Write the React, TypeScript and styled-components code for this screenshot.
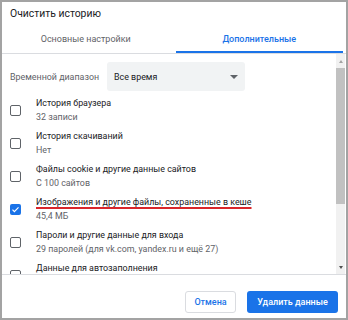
import styled, { createGlobalStyle } from "styled-components";

const GlobalStyle = createGlobalStyle`
  html, body {
    margin: 0;
    padding: 0;
    background: #ffffff;
  }
  body {
    font-family: Roboto, "Liberation Sans", Arial, sans-serif;
  }
`;

// the last row is cut by the footer, its second line is never seen
const items = [
  { title: "История браузера", sub: "32 записи", checked: false },
  { title: "История скачиваний", sub: "Нет", checked: false },
  { title: "Файлы cookie и другие данные сайтов", sub: "С 100 сайтов", checked: false },
  {
    title: "Изображения и другие файлы, сохраненные в кеше",
    sub: "45,4 МБ",
    checked: true,
    marked: true,
  },
  {
    title: "Пароли и другие данные для входа",
    sub: "29 паролей (для vk.com, yandex.ru и ещё 27)",
    checked: false,
  },
  { title: "Данные для автозаполнения", sub: "\u00a0", checked: false },
];

export default function App() {
  return (
    <>
      <GlobalStyle />
      <Frame>
        <Title>Очистить историю</Title>
        <Tabs>
          <Tab>Основные настройки</Tab>
          <Tab $active>Дополнительные</Tab>
        </Tabs>
        <Body>
          <Content>
            <RangeRow>
              <RangeLabel>Временной диапазон</RangeLabel>
              <Select>
                <span>Все время</span>
                <Caret />
              </Select>
            </RangeRow>
            {items.map((item) => (
              <Item key={item.title}>
                <Box $checked={item.checked}>
                  {item.checked && (
                    <svg width="9" height="9" viewBox="0 0 24 24">
                      <path
                        d="M4 12.5l5 5L20 6.5"
                        fill="none"
                        stroke="#fff"
                        strokeWidth="3.2"
                      />
                    </svg>
                  )}
                </Box>
                <Texts>
                  <ItemTitle $marked={item.marked}>{item.title}</ItemTitle>
                  <ItemSub>{item.sub}</ItemSub>
                </Texts>
              </Item>
            ))}
          </Content>
          <Scrollbar>
            <Arrow $up />
            <Thumb />
            <Track />
            <Arrow />
          </Scrollbar>
        </Body>
        <Footer>
          <CancelButton>Отмена</CancelButton>
          <PrimaryButton>Удалить данные</PrimaryButton>
        </Footer>
      </Frame>
    </>
  );
}

const Frame = styled.div`
  width: 348px;
  height: 320px;
  box-sizing: border-box;
  border: 2px solid #a3a3a3;
  background: #fff;
  display: flex;
  flex-direction: column;
  overflow: hidden;
  color: #202124;
`;

const Title = styled.div`
  height: 23px;
  padding-left: 8px;
  display: flex;
  align-items: center;
  font-size: 10.4px;
  color: #202124;
`;

const Tabs = styled.div`
  display: flex;
  height: 28px;
  border-bottom: 1px solid #dadce0;
`;

const Tab = styled.div<{ $active?: boolean }>`
  flex: 1;
  display: flex;
  align-items: center;
  justify-content: center;
  font-size: 9px;
  font-weight: ${(p) => (p.$active ? 500 : 400)};
  color: ${(p) => (p.$active ? "#1a73e8" : "#5f6368")};
  box-shadow: ${(p) => (p.$active ? "inset 0 -2px 0 #1a73e8" : "none")};
  margin-left: ${(p) => (p.$active ? "6px" : "0")};
  margin-right: ${(p) => (p.$active ? "3px" : "0")};
`;

const Body = styled.div`
  flex: 1;
  display: flex;
  min-height: 0;
  border-bottom: 1px solid #dadce0;
`;

const Content = styled.div`
  flex: 1;
  overflow: hidden;
  padding-left: 8px;
  padding-top: 8px;
`;

const RangeRow = styled.div`
  display: flex;
  align-items: center;
  height: 29px;
  margin-bottom: 3px;
`;

const RangeLabel = styled.div`
  font-size: 8.9px;
  color: #5f6368;
  width: 97px;
`;

const Select = styled.div`
  width: 138px;
  height: 29px;
  box-sizing: border-box;
  background: #f1f3f4;
  border-radius: 3px;
  padding: 0 7px;
  display: flex;
  align-items: center;
  justify-content: space-between;
  font-size: 8.9px;
  color: #202124;
`;

const Caret = styled.div`
  width: 0;
  height: 0;
  border-left: 4px solid transparent;
  border-right: 4px solid transparent;
  border-top: 4px solid #5f6368;
`;

const Item = styled.div`
  display: flex;
  align-items: center;
  gap: 15px;
  height: 33px;
`;

const Box = styled.div<{ $checked?: boolean }>`
  width: 11px;
  height: 11px;
  box-sizing: border-box;
  border-radius: 2px;
  border: ${(p) => (p.$checked ? "none" : "1.5px solid #5f6368")};
  background: ${(p) => (p.$checked ? "#1a73e8" : "transparent")};
  display: flex;
  align-items: center;
  justify-content: center;
  flex-shrink: 0;
`;

const Texts = styled.div`
  display: flex;
  flex-direction: column;
  gap: 3px;
`;

const ItemTitle = styled.div<{ $marked?: boolean }>`
  font-size: 8.9px;
  line-height: 11px;
  color: #202124;
  white-space: nowrap;
  ${(p) =>
    p.$marked &&
    `
    text-decoration: underline;
    text-decoration-color: #d9262b;
    text-decoration-thickness: 2px;
    text-underline-offset: 2px;
    text-decoration-skip-ink: none;
  `}
`;

const ItemSub = styled.div`
  font-size: 8.9px;
  line-height: 11px;
  color: #5f6368;
  white-space: nowrap;
`;

const Scrollbar = styled.div`
  width: 9px;
  margin-right: 1px;
  display: flex;
  flex-direction: column;
  background: #f1f1f1;
`;

const Arrow = styled.div<{ $up?: boolean }>`
  height: 14px;
  display: flex;
  align-items: center;
  justify-content: center;
  &::after {
    content: "";
    border-left: 2.5px solid transparent;
    border-right: 2.5px solid transparent;
    ${(p) =>
      p.$up ? "border-bottom: 3px solid #a3a3a3;" : "border-top: 3px solid #505050;"}
  }
`;

const Thumb = styled.div`
  height: 136px;
  background: #c1c1c1;
`;

const Track = styled.div`
  flex: 1;
`;

const Footer = styled.div`
  height: 43px;
  box-sizing: border-box;
  display: flex;
  align-items: flex-end;
  justify-content: flex-end;
  gap: 11px;
  padding: 0 8px 5px 0;
`;

const CancelButton = styled.div`
  width: 51px;
  height: 22px;
  box-sizing: border-box;
  border: 1px solid #dadce0;
  border-radius: 3px;
  display: flex;
  align-items: center;
  justify-content: center;
  font-size: 9px;
  font-weight: 500;
  color: #1a73e8;
`;

const PrimaryButton = styled.div`
  width: 91px;
  height: 22px;
  border-radius: 3px;
  background: #1a73e8;
  display: flex;
  align-items: center;
  justify-content: center;
  font-size: 9px;
  font-weight: 500;
  color: #fff;
`;
